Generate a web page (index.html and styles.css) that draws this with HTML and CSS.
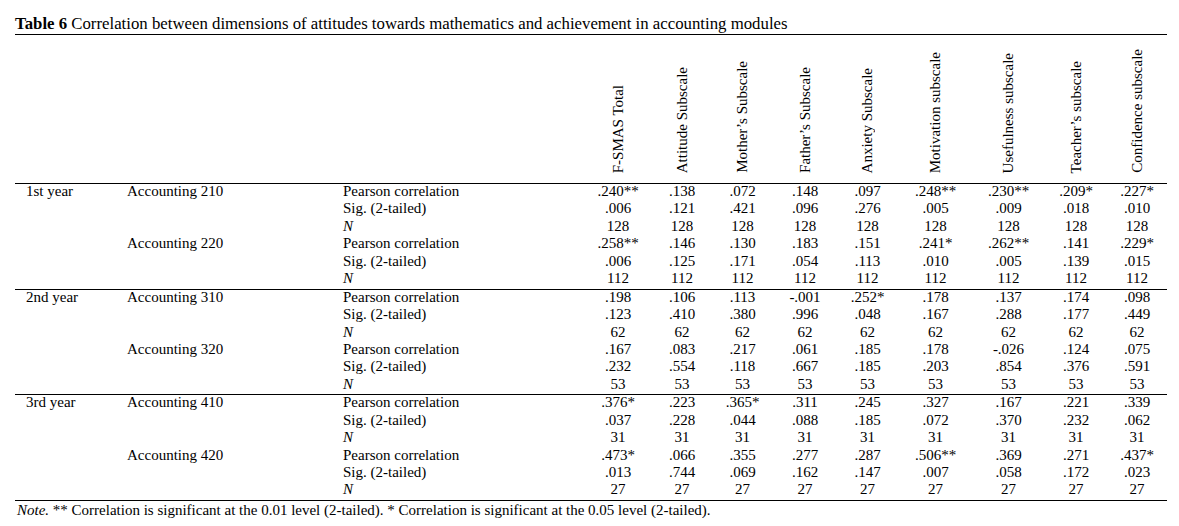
FILE: index.html
```html
<!DOCTYPE html>
<html lang="en">
<head>
<meta charset="utf-8">
<title>Table 6</title>
<link rel="stylesheet" href="styles.css">
</head>
<body>
<div class="page">
  <div class="caption"><b>Table 6</b> Correlation between dimensions of attitudes towards mathematics and achievement in accounting modules</div>
  <table class="tbl">
    <colgroup>
      <col class="w-year"><col class="w-mod"><col class="w-stat">
      <col class="w-d1"><col class="w-d2"><col class="w-d3"><col class="w-d4"><col class="w-d5"><col class="w-d6"><col class="w-d7"><col class="w-d8"><col class="w-d9">
    </colgroup>
    <thead>
      <tr class="head">
        <th></th><th></th><th></th>
        <th><span class="rot">F-SMAS Total</span></th>
        <th><span class="rot">Attitude Subscale</span></th>
        <th><span class="rot">Mother’s Subscale</span></th>
        <th><span class="rot">Father’s Subscale</span></th>
        <th><span class="rot">Anxiety Subscale</span></th>
        <th><span class="rot">Motivation subscale</span></th>
        <th><span class="rot">Usefulness subscale</span></th>
        <th><span class="rot">Teacher’s subscale</span></th>
        <th><span class="rot">Confidence subscale</span></th>
      </tr>
    </thead>
    <tbody>
      <tr><td class="year">1st year</td><td class="mod">Accounting 210</td><td class="stat">Pearson correlation</td><td>.240**</td><td>.138</td><td>.072</td><td>.148</td><td>.097</td><td>.248**</td><td>.230**</td><td>.209*</td><td>.227*</td></tr>
      <tr><td></td><td></td><td class="stat">Sig. (2-tailed)</td><td>.006</td><td>.121</td><td>.421</td><td>.096</td><td>.276</td><td>.005</td><td>.009</td><td>.018</td><td>.010</td></tr>
      <tr><td></td><td></td><td class="stat"><i>N</i></td><td>128</td><td>128</td><td>128</td><td>128</td><td>128</td><td>128</td><td>128</td><td>128</td><td>128</td></tr>
      <tr><td></td><td class="mod">Accounting 220</td><td class="stat">Pearson correlation</td><td>.258**</td><td>.146</td><td>.130</td><td>.183</td><td>.151</td><td>.241*</td><td>.262**</td><td>.141</td><td>.229*</td></tr>
      <tr><td></td><td></td><td class="stat">Sig. (2-tailed)</td><td>.006</td><td>.125</td><td>.171</td><td>.054</td><td>.113</td><td>.010</td><td>.005</td><td>.139</td><td>.015</td></tr>
      <tr class="end"><td></td><td></td><td class="stat"><i>N</i></td><td>112</td><td>112</td><td>112</td><td>112</td><td>112</td><td>112</td><td>112</td><td>112</td><td>112</td></tr>

      <tr><td class="year">2nd year</td><td class="mod">Accounting 310</td><td class="stat">Pearson correlation</td><td>.198</td><td>.106</td><td>.113</td><td>-.001</td><td>.252*</td><td>.178</td><td>.137</td><td>.174</td><td>.098</td></tr>
      <tr><td></td><td></td><td class="stat">Sig. (2-tailed)</td><td>.123</td><td>.410</td><td>.380</td><td>.996</td><td>.048</td><td>.167</td><td>.288</td><td>.177</td><td>.449</td></tr>
      <tr><td></td><td></td><td class="stat"><i>N</i></td><td>62</td><td>62</td><td>62</td><td>62</td><td>62</td><td>62</td><td>62</td><td>62</td><td>62</td></tr>
      <tr><td></td><td class="mod">Accounting 320</td><td class="stat">Pearson correlation</td><td>.167</td><td>.083</td><td>.217</td><td>.061</td><td>.185</td><td>.178</td><td>-.026</td><td>.124</td><td>.075</td></tr>
      <tr><td></td><td></td><td class="stat">Sig. (2-tailed)</td><td>.232</td><td>.554</td><td>.118</td><td>.667</td><td>.185</td><td>.203</td><td>.854</td><td>.376</td><td>.591</td></tr>
      <tr class="end"><td></td><td></td><td class="stat"><i>N</i></td><td>53</td><td>53</td><td>53</td><td>53</td><td>53</td><td>53</td><td>53</td><td>53</td><td>53</td></tr>

      <tr><td class="year">3rd year</td><td class="mod">Accounting 410</td><td class="stat">Pearson correlation</td><td>.376*</td><td>.223</td><td>.365*</td><td>.311</td><td>.245</td><td>.327</td><td>.167</td><td>.221</td><td>.339</td></tr>
      <tr><td></td><td></td><td class="stat">Sig. (2-tailed)</td><td>.037</td><td>.228</td><td>.044</td><td>.088</td><td>.185</td><td>.072</td><td>.370</td><td>.232</td><td>.062</td></tr>
      <tr><td></td><td></td><td class="stat"><i>N</i></td><td>31</td><td>31</td><td>31</td><td>31</td><td>31</td><td>31</td><td>31</td><td>31</td><td>31</td></tr>
      <tr><td></td><td class="mod">Accounting 420</td><td class="stat">Pearson correlation</td><td>.473*</td><td>.066</td><td>.355</td><td>.277</td><td>.287</td><td>.506**</td><td>.369</td><td>.271</td><td>.437*</td></tr>
      <tr><td></td><td></td><td class="stat">Sig. (2-tailed)</td><td>.013</td><td>.744</td><td>.069</td><td>.162</td><td>.147</td><td>.007</td><td>.058</td><td>.172</td><td>.023</td></tr>
      <tr class="end"><td></td><td></td><td class="stat"><i>N</i></td><td>27</td><td>27</td><td>27</td><td>27</td><td>27</td><td>27</td><td>27</td><td>27</td><td>27</td></tr>
    </tbody>
  </table>
  <div class="note"><i>Note.</i> ** Correlation is significant at the 0.01 level (2-tailed). * Correlation is significant at the 0.05 level (2-tailed).</div>
</div>
</body>
</html>
```

FILE: styles.css
```css
html, body {
  margin: 0;
  padding: 0;
  background: #fff;
}

.page {
  padding: 14px 12px 0 15px;
  width: 1152px;
  font-family: "Liberation Serif", "Times New Roman", serif;
  color: #000;
  font-size: 15px;
}

.caption {
  font-size: 16.8px;
  line-height: 19px;
  padding-bottom: 1px;
  border-bottom: 1px solid #000;
  white-space: nowrap;
}

.tbl {
  width: 1152px;
  table-layout: fixed;
  border-collapse: collapse;
  border-spacing: 0;
}

.w-year { width: 102px; }
.w-mod { width: 218px; }
.w-stat { width: 248px; }
.w-d1 { width: 70px; }
.w-d2 { width: 58px; }
.w-d3 { width: 63px; }
.w-d4 { width: 62px; }
.w-d5 { width: 63px; }
.w-d6 { width: 73px; }
.w-d7 { width: 73px; }
.w-d8 { width: 62px; }
.w-d9 { width: 60px; }

.head th {
  height: 142px;
  padding: 0 0 6px 0;
  vertical-align: bottom;
  text-align: center;
  font-weight: normal;
  border-bottom: 1px solid #000;
}

.rot {
  display: inline-block;
  writing-mode: vertical-rl;
  transform: rotate(180deg);
  white-space: nowrap;
  font-size: 15px;
  line-height: 17px;
}

.tbl td {
  padding: 0 0 3.45px 0;
  height: 14px;
  line-height: 14px;
  text-align: center;
  white-space: nowrap;
  vertical-align: top;
}

.tbl td.year {
  text-align: left;
  padding-left: 11px;
}

.tbl td.mod {
  text-align: left;
  padding-left: 10px;
}

.tbl td.stat {
  text-align: left;
  padding-left: 8px;
}

.tbl tr.end td {
  border-bottom: 1px solid #000;
}

.note {
  font-size: 15px;
  line-height: 16px;
  padding: 1px 0 0 2px;
  white-space: nowrap;
}
```
